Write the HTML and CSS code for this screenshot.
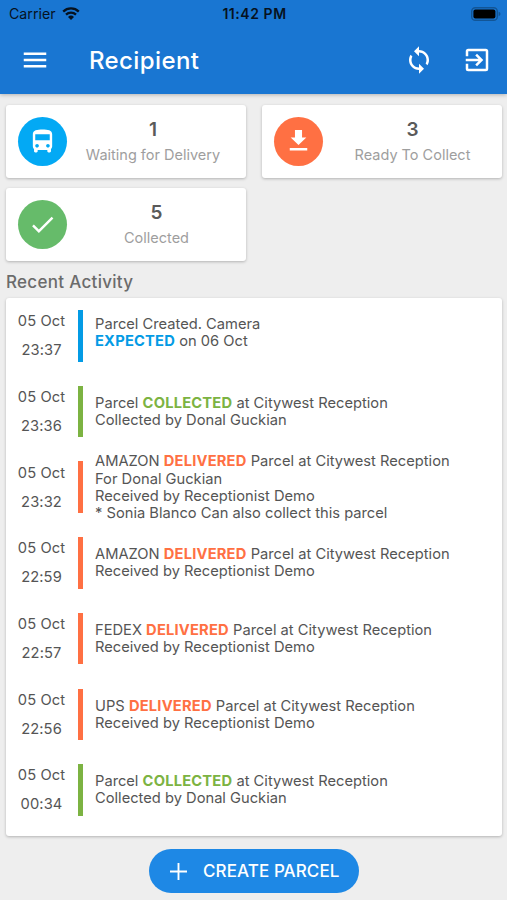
FILE: index.html
```html
<!DOCTYPE html>
<html lang="en">
<head>
<meta charset="utf-8">
<title>Recipient</title>
<link rel="stylesheet" href="styles.css">
</head>
<body>
<header class="top">
  <div class="status">
    <div class="carrier"><span>Carrier</span>
      <svg class="wifi" viewBox="0 0 18 13"><path d="M1.2 4.6a11.2 11.2 0 0 1 15.6 0M4 7.6a7.2 7.2 0 0 1 10 0" fill="none" stroke="#06121f" stroke-width="2.3"/><path d="M9 13 6 9.9a4.3 4.3 0 0 1 6 0z" fill="#06121f"/></svg>
    </div>
    <div class="clock">11:42 PM</div>
    <svg class="battery" viewBox="0 0 30 14"><rect x=".7" y=".7" width="25.6" height="12.6" rx="3.6" fill="none" stroke="#125596" stroke-width="1.4"/><rect x="2.4" y="2.4" width="22" height="9.2" rx="2" fill="#000"/><path d="M27.6 4.8q1.9.6 1.9 2.2t-1.9 2.2z" fill="#125596"/></svg>
  </div>
  <div class="toolbar">
    <svg class="icon menu" viewBox="0 0 24 24"><path d="M3 18h18v-2H3v2zm0-5h18v-2H3v2zm0-7v2h18V6H3z"/></svg>
    <h1>Recipient</h1>
    <svg class="icon sync" viewBox="0 0 24 24"><path d="M12 4V1L8 5l4 4V6c3.31 0 6 2.69 6 6 0 1.01-.25 1.97-.7 2.8l1.46 1.46C19.54 15.03 20 13.57 20 12c0-4.42-3.58-8-8-8zm0 14c-3.31 0-6-2.69-6-6 0-1.01.25-1.97.7-2.8L5.24 7.74C4.46 8.97 4 10.43 4 12c0 4.42 3.58 8 8 8v3l4-4-4-4v3z"/></svg>
    <svg class="icon exit" viewBox="0 0 24 24"><path d="M3 9V5a2 2 0 0 1 2-2h14a2 2 0 0 1 2 2v14a2 2 0 0 1-2 2H5a2 2 0 0 1-2-2v-4h2v4h14V5H5v4zM10.6 15.6 12 17l5-5-5-5-1.4 1.4L13.2 11H3v2h10.2z"/></svg>
  </div>
</header>
<main>
  <section class="stats">
    <div class="card stat">
      <div class="disc blue"><svg viewBox="0 0 24 24"><path d="M4 16c0 .88.39 1.67 1 2.22V20c0 .55.45 1 1 1h1c.55 0 1-.45 1-1v-1h8v1c0 .55.45 1 1 1h1c.55 0 1-.45 1-1v-1.78c.61-.55 1-1.34 1-2.22V6c0-3.5-3.58-4-8-4s-8 .5-8 4v10zm3.5 1c-.83 0-1.5-.67-1.5-1.5S6.67 14 7.5 14s1.500.67 1.500 1.500S8.330 17 7.500 17zm9 0c-.83 0-1.500-.67-1.500-1.500s.67-1.500 1.500-1.500 1.500.67 1.500 1.500-.67 1.500-1.500 1.500zm1.500-6H6V6h12v5z"/></svg></div>
      <div class="figure"><b>1</b><span>Waiting for Delivery</span></div>
    </div>
    <div class="card stat">
      <div class="disc orange"><svg viewBox="0 0 24 24"><path d="M8.600 2h6.800v7.200h4.100L12 16.300 4.500 9.200h4.100zM3.600 19.200h16.800v2.300H3.600z"/></svg></div>
      <div class="figure wide"><b>3</b><span>Ready To Collect</span></div>
    </div>
    <div class="card stat">
      <div class="disc green"><svg viewBox="0 0 24 24"><path d="M9 16.170 4.830 12l-1.420 1.410L9 19 21 7l-1.410-1.410z"/></svg></div>
      <div class="figure wide"><b>5</b><span>Collected</span></div>
    </div>
  </section>
  <h2>Recent Activity</h2>
  <section class="card feed">
    <div class="row expected"><div class="time"><span>05 Oct</span><span>23:37</span></div><i class="bar"></i><p>Parcel Created. Camera<br><b>EXPECTED</b> on 06 Oct</p></div>
    <div class="row collected"><div class="time"><span>05 Oct</span><span>23:36</span></div><i class="bar"></i><p>Parcel <b>COLLECTED</b> at Citywest Reception<br>Collected by Donal Guckian</p></div>
    <div class="row delivered"><div class="time"><span>05 Oct</span><span>23:32</span></div><i class="bar"></i><p>AMAZON <b>DELIVERED</b> Parcel at Citywest Reception<br>For Donal Guckian<br>Received by Receptionist Demo<br>* Sonia Blanco Can also collect this parcel</p></div>
    <div class="row delivered"><div class="time"><span>05 Oct</span><span>22:59</span></div><i class="bar"></i><p>AMAZON <b>DELIVERED</b> Parcel at Citywest Reception<br>Received by Receptionist Demo</p></div>
    <div class="row delivered"><div class="time"><span>05 Oct</span><span>22:57</span></div><i class="bar"></i><p>FEDEX <b>DELIVERED</b> Parcel at Citywest Reception<br>Received by Receptionist Demo</p></div>
    <div class="row delivered"><div class="time"><span>05 Oct</span><span>22:56</span></div><i class="bar"></i><p>UPS <b>DELIVERED</b> Parcel at Citywest Reception<br>Received by Receptionist Demo</p></div>
    <div class="row collected"><div class="time"><span>05 Oct</span><span>00:34</span></div><i class="bar"></i><p>Parcel <b>COLLECTED</b> at Citywest Reception<br>Collected by Donal Guckian</p></div>
  </section>
  <button class="create"><svg viewBox="0 0 18 18"><path d="M8 0h2v8h8v2h-8v8H8v-8H0V8h8z"/></svg><span>CREATE PARCEL</span></button>
</main>
</body>
</html>
```
FILE: styles.css
```css
* { box-sizing: border-box; }
body { margin: 0; height: 900px; overflow: hidden; background: #eee; font-family: Inter, "Liberation Sans", sans-serif; color: #555; }
svg { display: block; flex: none; }
.top { height: 94px; background: #1976d2; box-shadow: 0 1px 4px rgba(0,0,0,.25); }
.status { height: 27px; display: grid; grid-template-columns: 1fr auto 1fr; align-items: center; padding: 0 6px 0 9px; color: #06121f; font-size: 14.2px; }
.carrier { display: flex; align-items: center; gap: 6px; letter-spacing: 0; }
.wifi { width: 18px; height: 13px; }
.clock { font-weight: 600; font-size: 14px; letter-spacing: .55px; margin-left: -1px; }
.battery { width: 30px; height: 14px; justify-self: end; }
.toolbar { height: 66px; display: flex; align-items: center; padding: 0 15px 0 20px; }
.icon { width: 30px; height: 30px; fill: #fff; }
h1 { flex: 1; margin: 0 0 0 39px; color: #fff; font-size: 24px; font-weight: 500; letter-spacing: .4px; }
.sync { margin-right: 28px; }
main { padding: 11px 5px 0 6px; display: flex; flex-direction: column; }
.card { background: #fff; border-radius: 3px; box-shadow: 0 1px 3px rgba(0,0,0,.25); }
.stats { display: grid; grid-template-columns: 240px 240px; justify-content: space-between; gap: 10px 16px; }
.stat { height: 73px; display: flex; align-items: center; padding-left: 12px; }
.disc { width: 49px; height: 49px; border-radius: 50%; display: flex; align-items: center; justify-content: center; flex: none; }
.disc svg { width: 29px; height: 29px; fill: #fff; }
.disc.orange svg { width: 25px; height: 25px; margin-bottom: 2px; }
.blue { background: #03a9f4; }
.orange { background: #ff7043; }
.green { background: #66bb6a; }
.figure { flex: 1; padding-right: 7px; display: flex; flex-direction: column; align-items: center; }
.figure.wide { padding-right: 0; }
.figure b { font-size: 19px; line-height: 24px; font-weight: 600; color: #5a5a5a; }
.figure span { font-size: 14.500px; line-height: 20px; margin-top: 3px; letter-spacing: 0; color: #9e9e9e; }
h2 { margin: 9px 0 4px; font-size: 17px; line-height: 24px; font-weight: 500; color: #6b6b6b; letter-spacing: .3px; }
.feed { height: 538px; }
.row { height: 75.700px; display: flex; align-items: center; font-size: 14.700px; }
.time { width: 72px; padding: 1px 1px 0 0; display: flex; flex-direction: column; align-items: center; line-height: 29px; letter-spacing: .1px; }
.bar { width: 5px; height: 51.500px; background: currentColor; }
.row p { margin: 0 0 0 12px; padding-top: 1px; line-height: 17.150px; white-space: nowrap; color: #555; }
.row.expected p { padding-bottom: 6px; }
.row b { font-weight: 700; letter-spacing: .2px; }
.expected .bar, .expected b { color: #039be5; }
.collected .bar, .collected b { color: #7cb342; }
.delivered .bar, .delivered b { color: #ff7043; }
.create { align-self: center; margin: 13px 0 0; width: 210px; height: 44px; border: 0; border-radius: 22px; background: #1e88e5; color: #fff; display: flex; align-items: center; justify-content: flex-start; padding: 0 0 0 21px; font: 500 17px Inter, sans-serif; letter-spacing: .1px; gap: 16px; white-space: nowrap; }
.create svg { width: 17px; height: 17px; fill: #fff; }
```
